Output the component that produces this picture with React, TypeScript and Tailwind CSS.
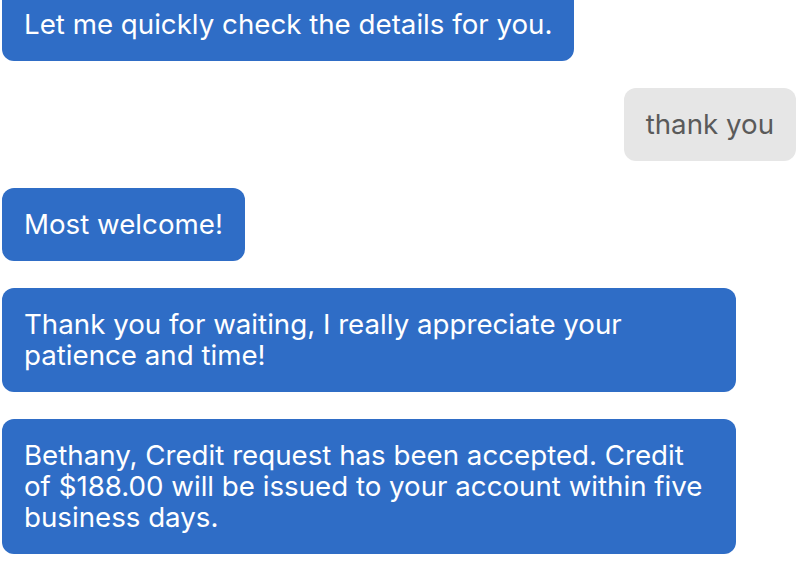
import React from "react";

type Msg = { from: "agent" | "user"; text: string };

const messages: Msg[] = [
  { from: "agent", text: "Let me quickly check the details for you." },
  { from: "user", text: "thank you" },
  { from: "agent", text: "Most welcome!" },
  { from: "agent", text: "Thank you for waiting, I really appreciate your patience and time!" },
  {
    from: "agent",
    text: "Bethany, Credit request has been accepted. Credit of $188.00 will be issued to your account within five business days.",
  },
];

function Bubble({ msg }: { msg: Msg }) {
  if (msg.from === "user") {
    return (
      <div className="flex justify-end">
        <div className="rounded-[12px] bg-[#e6e6e6] px-[22px] py-[21px] text-[#5a5a5a]">
          {msg.text}
        </div>
      </div>
    );
  }
  return (
    <div className="flex justify-start">
      <div className="max-w-[734px] rounded-[12px] bg-[#2f6dc6] px-[22px] py-[21px] text-white">
        {msg.text}
      </div>
    </div>
  );
}

export default function App() {
  return (
    <div className="h-[562px] w-[802px] overflow-hidden bg-white">
      <div
        className="-mt-[12px] flex flex-col gap-[27px] pl-[2px] pr-[6px] text-[27.7px] leading-[31px]"
        style={{ fontFamily: "Inter, 'Liberation Sans', sans-serif" }}
      >
        {messages.map((m, i) => (
          <Bubble key={i} msg={m} />
        ))}
      </div>
    </div>
  );
}
